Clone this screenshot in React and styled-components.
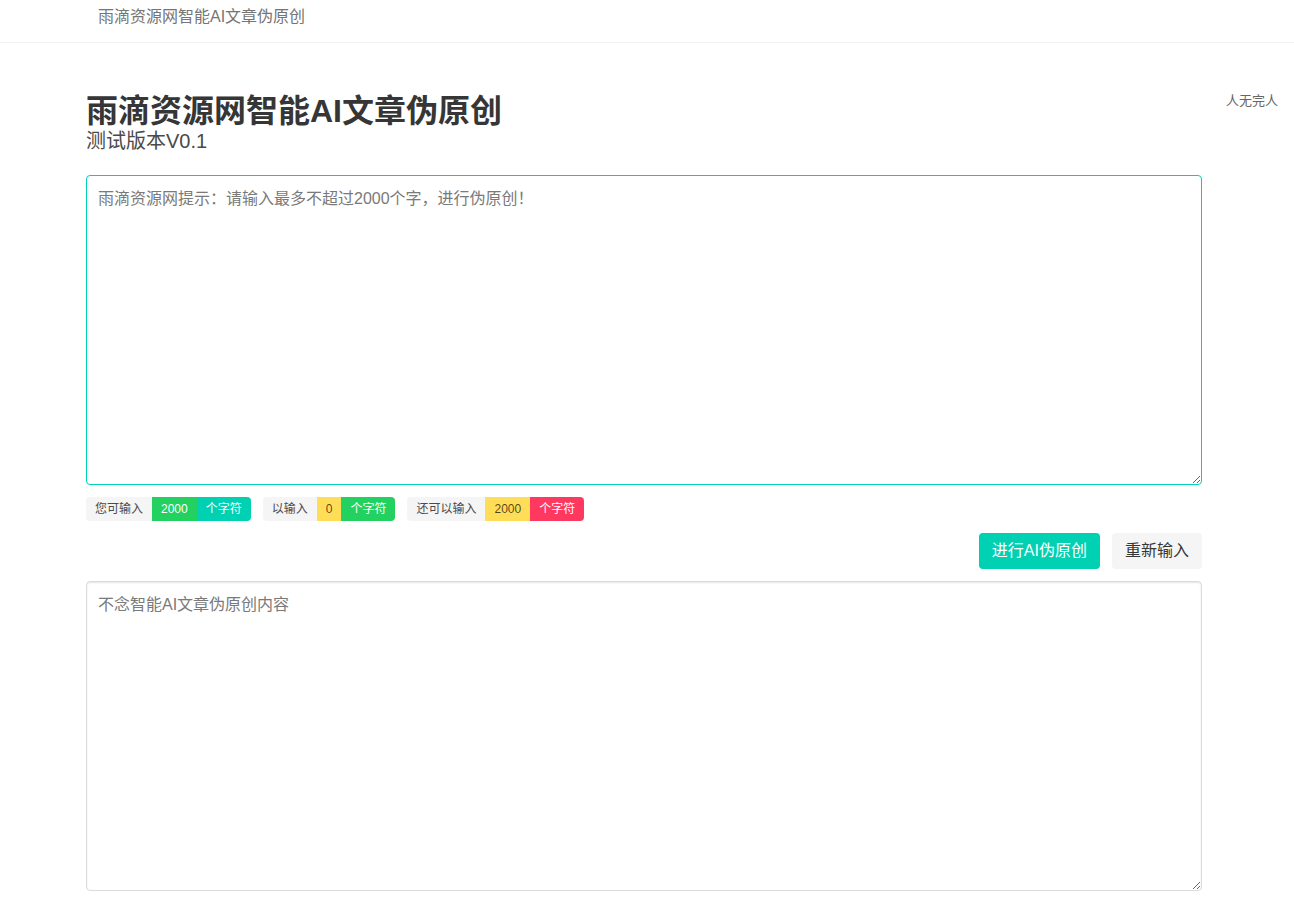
import React from "react";
import styled, { createGlobalStyle } from "styled-components";

const Global = createGlobalStyle`
  html, body { margin: 0; padding: 0; background: #fff; }
  body {
    font-family: "Liberation Sans", "Noto Sans CJK SC", sans-serif;
    color: #4a4a4a;
    font-size: 16px;
  }
  * { box-sizing: border-box; }
`;

const Page = styled.div`
  display: flex;
  flex-direction: column;
  min-height: 910px;
`;

const NavBar = styled.header`
  height: 43px;
  border-bottom: 1px solid #f2f2f2;
  display: flex;
  align-items: center;
  padding-left: 98px;
  padding-bottom: 9px;
`;

const Brand = styled.span`
  font-size: 16px;
  color: #757575;
  line-height: 20px;
`;

const MainRow = styled.div`
  display: flex;
  padding-top: 50px;
`;

const Content = styled.main`
  margin-left: 86px;
  width: 1116px;
  display: flex;
  flex-direction: column;
`;

const Aside = styled.aside`
  margin-left: auto;
  padding-right: 16px;
  font-size: 13px;
  line-height: 16px;
  color: #666;
`;

const Title = styled.h1`
  margin: 0;
  font-size: 32px;
  font-weight: 700;
  line-height: 36px;
  color: #363636;
`;

const Subtitle = styled.h2`
  margin: 0;
  font-size: 20px;
  font-weight: 400;
  line-height: 24px;
  color: #4a4a4a;
`;

const TextArea = styled.textarea`
  display: block;
  width: 100%;
  height: 310px;
  margin-top: ${(p) => p.$mt || 0}px;
  padding: 11px 11px;
  font-family: "Liberation Sans", "Noto Sans CJK SC", sans-serif;
  font-size: 16px;
  line-height: 24px;
  color: #363636;
  border: 1px solid ${(p) => (p.$active ? "#00d1b2" : "#dbdbdb")};
  border-radius: 4px;
  box-shadow: ${(p) => (p.$active ? "none" : "inset 0 1px 2px rgba(10,10,10,0.1)")};
  outline: none;
  resize: vertical;
  &::placeholder { color: #7a7a7a; }
`;

const TagRow = styled.div`
  display: flex;
  gap: 12px;
  margin-top: 12px;
`;

const TagGroup = styled.div`
  display: flex;
`;

const Tag = styled.span`
  display: inline-flex;
  align-items: center;
  height: 24px;
  padding: 0 9px;
  font-size: 12px;
  line-height: 1;
  white-space: nowrap;
  background: ${(p) => p.$bg};
  color: ${(p) => p.$fg};
  &:first-child { border-radius: 4px 0 0 4px; }
  &:last-child { border-radius: 0 4px 4px 0; }
`;

const ButtonRow = styled.div`
  display: flex;
  justify-content: flex-end;
  gap: 12px;
  margin-top: 12px;
`;

const Button = styled.button`
  height: 36px;
  padding: 0 13px;
  border: none;
  border-radius: 4px;
  font-family: "Liberation Sans", "Noto Sans CJK SC", sans-serif;
  font-size: 16px;
  line-height: 1;
  cursor: pointer;
  background: ${(p) => (p.$primary ? "#00d1b2" : "#f5f5f5")};
  color: ${(p) => (p.$primary ? "#fff" : "#363636")};
`;

const GREY = ["#f5f5f5", "#4a4a4a"];
const GREEN = ["#23d160", "#fff"];
const TEAL = ["#00d1b2", "#fff"];
const YELLOW = ["#ffdd57", "rgba(0,0,0,0.7)"];
const RED = ["#ff3860", "#fff"];

const groups = [
  [["您可输入", GREY], ["2000", GREEN], ["个字符", TEAL]],
  [["以输入", GREY], ["0", YELLOW], ["个字符", GREEN]],
  [["还可以输入", GREY], ["2000", YELLOW], ["个字符", RED]],
];

export default function App() {
  return (
    <Page>
      <Global />
      <NavBar>
        <Brand>雨滴资源网智能AI文章伪原创</Brand>
      </NavBar>
      <MainRow>
        <Content>
          <Title>雨滴资源网智能AI文章伪原创</Title>
          <Subtitle>测试版本V0.1</Subtitle>
          <TextArea
            $active
            $mt={22}
            placeholder="雨滴资源网提示：请输入最多不超过2000个字，进行伪原创！"
          />
          <TagRow>
            {groups.map((g, i) => (
              <TagGroup key={i}>
                {g.map(([t, [bg, fg]], j) => (
                  <Tag key={j} $bg={bg} $fg={fg}>
                    {t}
                  </Tag>
                ))}
              </TagGroup>
            ))}
          </TagRow>
          <ButtonRow>
            <Button $primary>进行AI伪原创</Button>
            <Button>重新输入</Button>
          </ButtonRow>
          <TextArea $mt={12} placeholder="不念智能AI文章伪原创内容" />
        </Content>
        <Aside>人无完人</Aside>
      </MainRow>
    </Page>
  );
}
